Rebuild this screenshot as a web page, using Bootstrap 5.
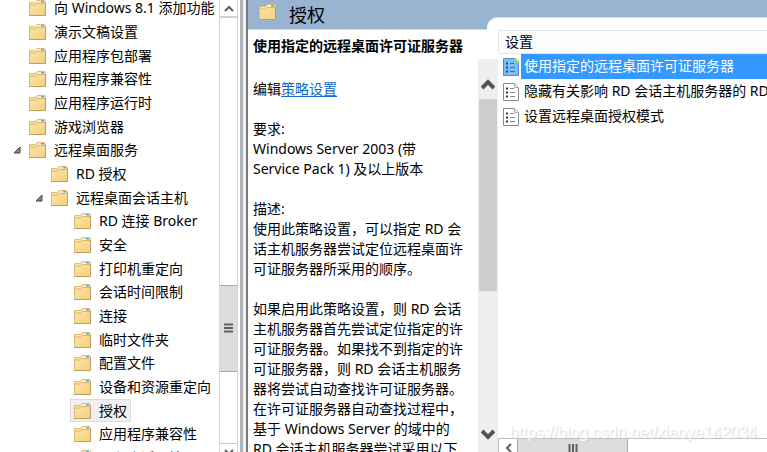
<!DOCTYPE html>
<html lang="zh-CN">
<head>
<meta charset="utf-8">
<meta name="viewport" content="width=device-width, initial-scale=1">
<title>授权</title>
<link rel="stylesheet" href="https://cdn.jsdelivr.net/npm/bootstrap@5.3.0/dist/css/bootstrap.min.css">
<style>
body { font-family: "Noto Sans", "Noto Sans CJK SC", sans-serif; font-size: 14px; line-height: 20px; color: #000; background: #fff; }
button { border: 0; padding: 0; background: none; color: inherit; }
.tree-pane { width: 238px; }
.tree-list > li { height: 24px; }
.tree-list > li:nth-child(3n) { height: 23px; }
.tree-list { margin-top: -4px; }
.lv-0 { padding-left: 13px; }
.lv-1 { padding-left: 35px; }
.lv-2 { padding-left: 58px; }
.twisty { width: 12px; flex: none; display: flex; }
.tree-item { height: 23px; padding: 0 3px; border: 1px solid transparent; white-space: nowrap; gap: 8px; }
.tree-item.active { background: #f0f0f0; border-color: #dcdcdc; }
.folder { width: 17px; height: 16px; flex: none; }
.vbar { width: 19px; border: solid #d4d4d4; border-width: 0 1px; background: #fff; }
.vbar-btn { height: 18px; }
.vbar-btn:first-child { border-bottom: 2px solid #d0d0d0; }
.vbar-btn:last-child { border-top: 1px solid #c8c8c8; height: 9px; overflow: hidden; padding-top: 5px; }
.vbar-thumb { background: #dcdcdc; border: solid #a6a6a6; border-width: 1px 0; flex: 85 1 0; }
.space-a { flex: 269 1 0; }
.space-b { flex: 72 1 0; }
.splitter { width: 8px; background: #f0f0f0; border-left: 3px solid #b1b5ba; border-right: 2px solid #7c7c7c; margin-left: 2px; }
.title-bar { height: 30px; background: #99b4d1; }
.title-text { width: 239px; padding: 0 0 0 11px; border-bottom: 1px solid #c9d7e6; gap: 13px; font-size: 18px; }
.title-text .folder { margin-top: -6px; }
.tab-edge { margin-top: 17px; background: #fff; border-top: 1px solid #d5e0ec; border-radius: 11px 0 0 0; }
.desc-pane { width: 230px; padding: 6px 0 0 5px; white-space: nowrap; }
.desc-pane p { margin: 0 0 20px; }
.desc-pane h1 { font-size: 14px; line-height: 20px; font-weight: 700; margin: 0 0 23px; }
.desc-pane a { color: #0a6cd0; text-underline-offset: 2px; }
.dbar { width: 20px; margin-top: 29px; background: #efefef; padding: 0 1px; }
.dbar-btn { height: 40px; padding-top: 11px; }
.dbar-thumb { background: #cdcdcd; flex: 192 1 0; }
.space-c { flex: 121 1 0; }
.col-head { height: 24px; border: solid #e5e5e5; border-width: 1px 0 1px 1px; background: #fcfcfc; padding: 0 0 1px 6px; font-weight: 400; }
.set-item { height: 25px; width: 100%; gap: 2px; padding-left: 5px; white-space: nowrap; text-align: left; }
.set-name { flex: 1; padding-left: 3px; line-height: 23px; height: 25px; }
.set-item.active .set-name { background: #39f; color: #fff; }
.set-item svg { flex: none; }
.hbar { height: 14px; border: solid #bdbdbd; border-width: 1px 0 0 1px; overflow: hidden; }
.hbar-btn { width: 18px; height: 18px; }
.hbar-thumb { width: 111px; height: 18px; background: #dcdcdc; border: solid #a6a6a6; border-width: 0 1px; }
.watermark { right: 10px; bottom: 9px; font: 16px/20px "Liberation Sans", sans-serif; color: #fff; text-shadow: 1px 1px 1px #d2d2d2; pointer-events: none; }
</style>
</head>
<body class="vh-100 overflow-hidden d-flex">
<svg width="0" height="0" class="position-absolute" aria-hidden="true">
  <defs>
    <linearGradient id="gold" x1="0" y1="0" x2="1" y2="1"><stop offset="0" stop-color="#fde8ac"/><stop offset="1" stop-color="#f3cf7c"/></linearGradient>
    <symbol id="folder" viewBox="0 0 17 16">
      <path d="M.5 2.500H6.500L8 .500H15.500L16.500 1.500V15.500H.5Z" fill="url(#gold)" stroke="#dcbc78"/>
      <path d="M9 1H15V3H9Z" fill="#f4f4ea"/><path d="M12 1H15V2.500H12Z" fill="#5aa5d6"/>
      <path d="M1 5H6.500L8.500 3.500H16" fill="none" stroke="#d9b768"/>
      <path d="M0 15.500H16.500V3" fill="none" stroke="#bf9f5c"/>
    </symbol>
    <symbol id="twisty" viewBox="0 0 8 8"><path d="M7 1V7H1Z" fill="#888" stroke="#444"/></symbol>
    <symbol id="sheet" viewBox="0 0 16 18">
      <path d="M.5.5H11.500L15.500 4.500V17.500H.5Z" fill="#fff" stroke="#8a8a8a"/><path d="M11.500.5V4.500H15.500" fill="#eee" stroke="#aaa"/>
      <path d="M3 4.500H5V6.500H3ZM3 8.500H5V10.500H3ZM3 12.500H5V14.500H3Z" fill="#333"/><path d="M7 5.500H11M7 9.500H12M7 13.500H12" stroke="#8b82a0"/>
    </symbol>
    <symbol id="sheet-on" viewBox="0 0 16 18">
      <path d="M.5.5H11.500L15.500 4.500V17.500H.5Z" fill="#7dbcf6" stroke="#4a8fcb"/><path d="M12 .5L15.500 4" fill="none" stroke="#b5e61d" stroke-width="2"/>
      <path d="M3 4.500H5V6.500H3ZM3 8.500H5V10.500H3ZM3 12.500H5V14.500H3Z" fill="#204f88"/><path d="M7 5.500H11M7 9.500H12M7 13.500H12" stroke="#3f72b4"/>
    </symbol>
  </defs>
</svg>

<nav class="tree-pane d-flex flex-shrink-0 h-100" aria-label="策略树">
  <ul class="tree-list list-unstyled flex-grow-1 mb-0 overflow-hidden" id="tree">
    <li class="lv-0 d-flex"><span class="twisty"></span><button class="tree-item d-flex align-items-center"><svg class="folder"><use href="#folder"/></svg>向 Windows 8.1 添加功能</button></li>
    <li class="lv-0 d-flex"><span class="twisty"></span><button class="tree-item d-flex align-items-center"><svg class="folder"><use href="#folder"/></svg>演示文稿设置</button></li>
    <li class="lv-0 d-flex"><span class="twisty"></span><button class="tree-item d-flex align-items-center"><svg class="folder"><use href="#folder"/></svg>应用程序包部署</button></li>
    <li class="lv-0 d-flex"><span class="twisty"></span><button class="tree-item d-flex align-items-center"><svg class="folder"><use href="#folder"/></svg>应用程序兼容性</button></li>
    <li class="lv-0 d-flex"><span class="twisty"></span><button class="tree-item d-flex align-items-center"><svg class="folder"><use href="#folder"/></svg>应用程序运行时</button></li>
    <li class="lv-0 d-flex"><span class="twisty"></span><button class="tree-item d-flex align-items-center"><svg class="folder"><use href="#folder"/></svg>游戏浏览器</button></li>
    <li class="lv-0 d-flex"><span class="twisty align-items-center"><svg width="8" height="8"><use href="#twisty"/></svg></span><button class="tree-item d-flex align-items-center"><svg class="folder"><use href="#folder"/></svg>远程桌面服务</button></li>
    <li class="lv-1 d-flex"><span class="twisty"></span><button class="tree-item d-flex align-items-center"><svg class="folder"><use href="#folder"/></svg>RD 授权</button></li>
    <li class="lv-1 d-flex"><span class="twisty align-items-center"><svg width="8" height="8"><use href="#twisty"/></svg></span><button class="tree-item d-flex align-items-center"><svg class="folder"><use href="#folder"/></svg>远程桌面会话主机</button></li>
    <li class="lv-2 d-flex"><span class="twisty"></span><button class="tree-item d-flex align-items-center"><svg class="folder"><use href="#folder"/></svg>RD 连接 Broker</button></li>
    <li class="lv-2 d-flex"><span class="twisty"></span><button class="tree-item d-flex align-items-center"><svg class="folder"><use href="#folder"/></svg>安全</button></li>
    <li class="lv-2 d-flex"><span class="twisty"></span><button class="tree-item d-flex align-items-center"><svg class="folder"><use href="#folder"/></svg>打印机重定向</button></li>
    <li class="lv-2 d-flex"><span class="twisty"></span><button class="tree-item d-flex align-items-center"><svg class="folder"><use href="#folder"/></svg>会话时间限制</button></li>
    <li class="lv-2 d-flex"><span class="twisty"></span><button class="tree-item d-flex align-items-center"><svg class="folder"><use href="#folder"/></svg>连接</button></li>
    <li class="lv-2 d-flex"><span class="twisty"></span><button class="tree-item d-flex align-items-center"><svg class="folder"><use href="#folder"/></svg>临时文件夹</button></li>
    <li class="lv-2 d-flex"><span class="twisty"></span><button class="tree-item d-flex align-items-center"><svg class="folder"><use href="#folder"/></svg>配置文件</button></li>
    <li class="lv-2 d-flex"><span class="twisty"></span><button class="tree-item d-flex align-items-center"><svg class="folder"><use href="#folder"/></svg>设备和资源重定向</button></li>
    <li class="lv-2 d-flex"><span class="twisty"></span><button class="tree-item active d-flex align-items-center" aria-current="true"><svg class="folder"><use href="#folder"/></svg>授权</button></li>
    <li class="lv-2 d-flex"><span class="twisty"></span><button class="tree-item d-flex align-items-center"><svg class="folder"><use href="#folder"/></svg>应用程序兼容性</button></li>
    <li class="lv-2 d-flex"><span class="twisty"></span><button class="tree-item d-flex align-items-center"><svg class="folder"><use href="#folder"/></svg>远程会话环境</button></li>
  </ul>
  <div class="vbar d-flex flex-column flex-shrink-0">
    <button class="vbar-btn d-flex align-items-center justify-content-center" aria-label="向上滚动"><svg width="10" height="7"><path d="M1 6L5 2L9 6" fill="none" stroke="#606060" stroke-width="2"/></svg></button>
    <div class="space-a"></div>
    <div class="vbar-thumb d-flex align-items-center justify-content-center"><svg width="9" height="10"><path d="M0 1.500H9M0 5H9M0 8.500H9" stroke="#606060" stroke-width="2"/></svg></div>
    <div class="space-b"></div>
    <button class="vbar-btn d-flex justify-content-center" aria-label="向下滚动"><svg class="flex-shrink-0" width="10" height="7"><path d="M1 1L5 5L9 1" fill="none" stroke="#606060" stroke-width="2"/></svg></button>
  </div>
</nav>
<div class="splitter flex-shrink-0"></div>

<main class="d-flex flex-column flex-grow-1 h-100 overflow-hidden position-relative">
  <header class="title-bar d-flex flex-shrink-0">
    <div class="title-text d-flex align-items-center flex-shrink-0"><svg class="folder"><use href="#folder"/></svg><span>授权</span></div>
    <div class="tab-edge flex-grow-1"></div>
  </header>
  <div class="d-flex flex-grow-1 overflow-hidden">
    <section class="desc-pane flex-shrink-0">
      <h1>使用指定的远程桌面许可证服务器</h1>
      <p>编辑<a href="#">策略设置</a></p>
      <p>要求:<br>Windows Server 2003 (带<br>Service Pack 1) 及以上版本</p>
      <p>描述:<br>使用此策略设置，可以指定 RD 会<br>话主机服务器尝试定位远程桌面许<br>可证服务器所采用的顺序。</p>
      <p>如果启用此策略设置，则 RD 会话<br>主机服务器首先尝试定位指定的许<br>可证服务器。如果找不到指定的许<br>可证服务器，则 RD 会话主机服务<br>器将尝试自动查找许可证服务器。<br>在许可证服务器自动查找过程中，<br>基于 Windows Server 的域中的<br>RD 会话主机服务器尝试采用以下</p>
    </section>
    <div class="dbar d-flex flex-column flex-shrink-0">
      <button class="dbar-btn d-flex align-items-center justify-content-center" aria-label="向上滚动"><svg width="14" height="11"><path d="M1 9L7 3L13 9" fill="none" stroke="#555" stroke-width="4"/></svg></button>
      <div class="dbar-thumb"></div>
      <div class="space-c"></div>
      <button class="dbar-btn d-flex align-items-start justify-content-center" aria-label="向下滚动"><svg width="14" height="22"><path d="M1 8L7 14L13 8" fill="none" stroke="#555" stroke-width="4"/></svg></button>
    </div>
    <section class="d-flex flex-column flex-grow-1 overflow-hidden">
      <div class="col-head d-flex align-items-center flex-shrink-0">设置</div>
      <div class="flex-grow-1 overflow-hidden">
        <button class="set-item active d-flex align-items-center"><svg width="16" height="18"><use href="#sheet-on"/></svg><span class="set-name">使用指定的远程桌面许可证服务器</span></button>
        <button class="set-item d-flex align-items-center"><svg width="16" height="18"><use href="#sheet"/></svg><span class="set-name">隐藏有关影响 RD 会话主机服务器的 RD 授权问题的通知</span></button>
        <button class="set-item d-flex align-items-center"><svg width="16" height="18"><use href="#sheet"/></svg><span class="set-name">设置远程桌面授权模式</span></button>
      </div>
      <div class="hbar d-flex flex-shrink-0">
        <button class="hbar-btn d-flex align-items-center justify-content-center flex-shrink-0" aria-label="向左滚动"><svg width="7" height="10"><path d="M6 1L2 5L6 9" fill="none" stroke="#606060" stroke-width="2"/></svg></button>
        <div class="hbar-thumb d-flex align-items-center justify-content-center flex-shrink-0"><svg width="10" height="9"><path d="M1.500 0V9M5 0V9M8.500 0V9" stroke="#606060" stroke-width="2"/></svg></div>
      </div>
    </section>
  </div>
  <div class="watermark position-absolute">https://blog.csdn.net/xiaoye142034</div>
</main>
<script src="https://cdn.jsdelivr.net/npm/bootstrap@5.3.0/dist/js/bootstrap.bundle.min.js"></script>
</body>
</html>
